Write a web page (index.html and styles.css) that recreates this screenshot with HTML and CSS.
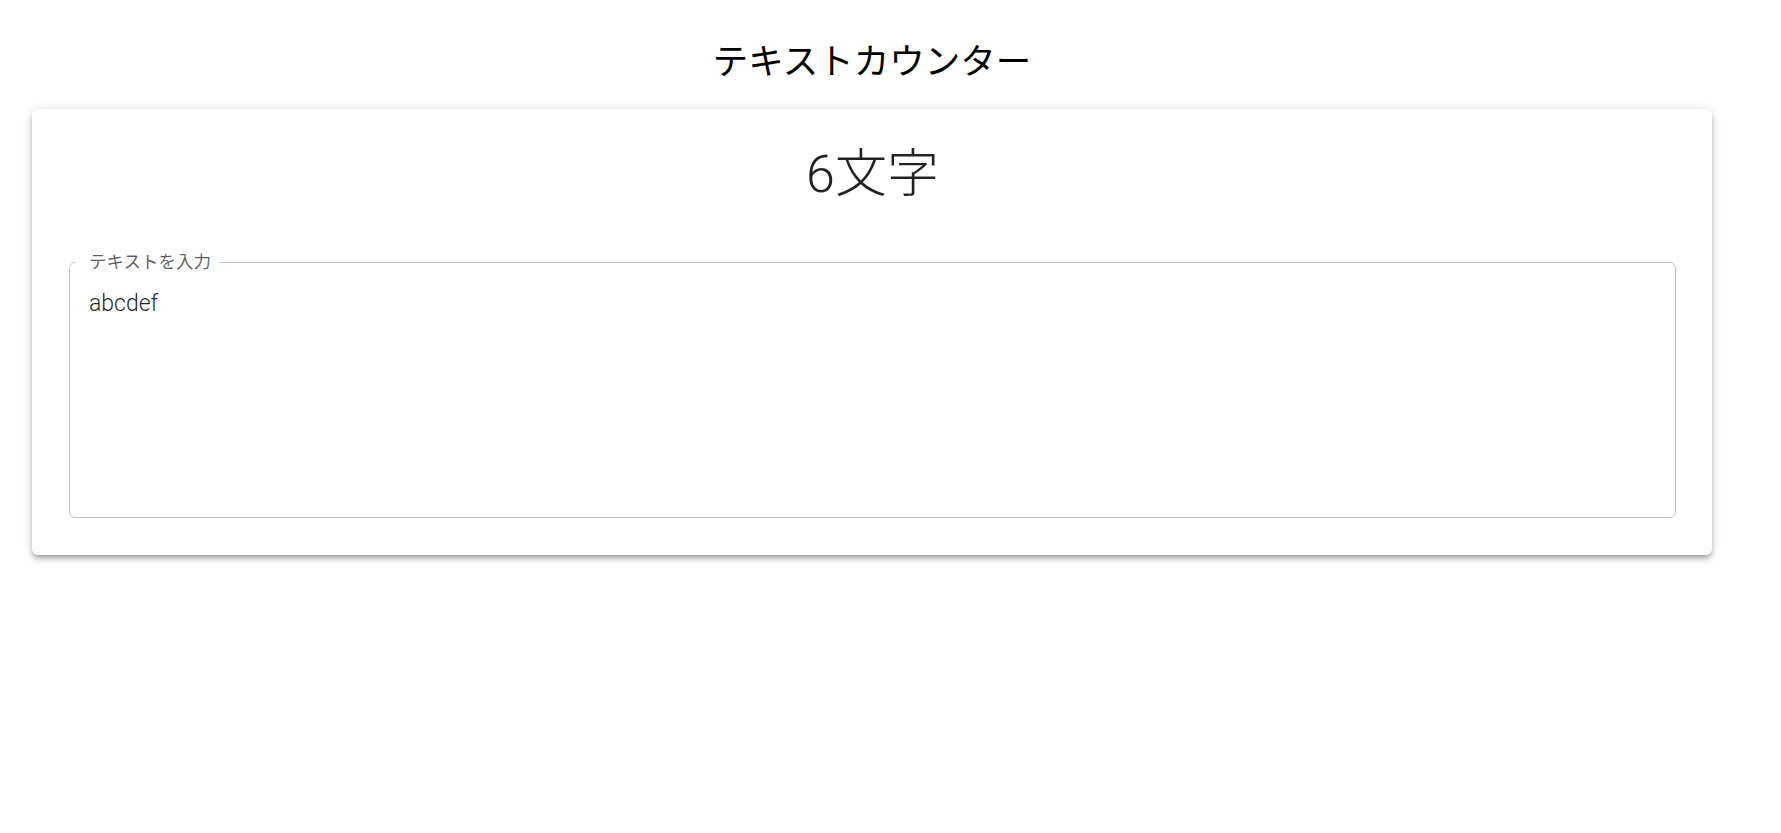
FILE: index.html
```html
<!DOCTYPE html>
<html lang="ja">
<head>
<meta charset="utf-8">
<title>テキストカウンター</title>
<link rel="stylesheet" href="styles.css">
</head>
<body>
<main class="container">
  <h1 class="title">テキストカウンター</h1>
  <section class="card">
    <div class="count">6文字</div>
    <fieldset class="field">
      <legend class="field-label">テキストを入力</legend>
      <textarea class="field-input" spellcheck="false">abcdef</textarea>
    </fieldset>
  </section>
</main>
</body>
</html>
```

FILE: styles.css
```css
html, body {
  margin: 0;
  padding: 0;
  background: #ffffff;
}

body {
  min-height: 100vh;
  font-family: Roboto, "Noto Sans CJK JP", sans-serif;
  color: rgba(0, 0, 0, 0.87);
}

.container {
  width: 1680px;
  margin-left: 32px;
  padding-bottom: 60px;
  display: flex;
  flex-direction: column;
}

.title {
  margin: 33px 0 24px;
  font-family: "Noto Sans CJK JP", sans-serif;
  font-weight: 400;
  font-size: 35.5px;
  line-height: 52px;
  color: #000000;
  text-align: center;
}

.card {
  background: #ffffff;
  border-radius: 6px;
  padding: 35px 36px 37px 37px;
  display: flex;
  flex-direction: column;
  box-shadow: 0 4px 5px -3px rgba(0, 0, 0, 0.28),
              0 4px 6px 0 rgba(0, 0, 0, 0.18),
              0 1px 12px 0 rgba(0, 0, 0, 0.12);
}

.count {
  font-family: Roboto, "Noto Sans CJK JP", sans-serif;
  font-weight: 300;
  font-size: 52px;
  line-height: 62px;
  text-align: center;
  color: rgba(0, 0, 0, 0.87);
  margin-bottom: 44px;
}

.field {
  margin: 0;
  padding: 0;
  border: 1px solid rgba(0, 0, 0, 0.23);
  border-radius: 6px;
  min-width: 0;
}

.field-label {
  margin-left: 6px;
  padding: 0 8px 0 13px;
  font-family: Roboto, "Noto Sans CJK JP", sans-serif;
  font-size: 17.5px;
  line-height: 25px;
  color: rgba(0, 0, 0, 0.64);
}

.field-input {
  display: block;
  box-sizing: border-box;
  width: 100%;
  height: 242px;
  margin: 0;
  padding: 12px 19px 0;
  border: none;
  outline: none;
  resize: none;
  background: transparent;
  font-family: Roboto, sans-serif;
  font-weight: 300;
  font-size: 23px;
  line-height: 33px;
  color: rgba(0, 0, 0, 0.87);
}
```
